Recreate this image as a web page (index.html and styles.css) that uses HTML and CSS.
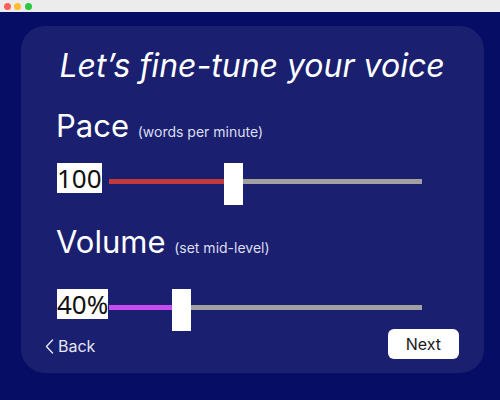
FILE: index.html
```html
<!DOCTYPE html>
<html lang="en">
<head>
<meta charset="utf-8">
<title>Voice settings</title>
<link rel="stylesheet" href="styles.css">
</head>
<body>
<div class="titlebar">
  <span class="dot dot-red"></span>
  <span class="dot dot-yellow"></span>
  <span class="dot dot-green"></span>
</div>
<main class="stage">
  <section class="card">
    <h1 class="title">Let’s fine-tune your voice</h1>

    <div class="field field-pace">
      <h2 class="label">Pace <small class="hint">(words per minute)</small></h2>
      <div class="slider">
        <span class="value">100</span>
        <div class="track">
          <span class="fill fill-red" style="width:115px"></span>
          <span class="thumb"></span>
          <span class="rest"></span>
        </div>
      </div>
    </div>

    <div class="field field-volume">
      <h2 class="label">Volume <small class="hint">(set mid-level)</small></h2>
      <div class="slider">
        <span class="value">40%</span>
        <div class="track">
          <span class="fill fill-purple" style="width:63px"></span>
          <span class="thumb"></span>
          <span class="rest"></span>
        </div>
      </div>
    </div>

    <footer class="nav">
      <button class="back" type="button">
        <svg class="chevron" width="9" height="15" viewBox="0 0 9 15" aria-hidden="true">
          <polyline points="7.5,1 1.5,7.5 7.5,14" fill="none" stroke="#e4e6f4" stroke-width="1.4" stroke-linecap="round" stroke-linejoin="round"/>
        </svg>
        <span>Back</span>
      </button>
      <button class="next" type="button">Next</button>
    </footer>
  </section>
</main>
</body>
</html>
```

FILE: styles.css
```css
* { box-sizing: border-box; }

html, body {
  margin: 0;
  padding: 0;
}

body {
  width: 500px;
  height: 400px;
  overflow: hidden;
  background: #050d64;
  font-family: Inter, "Noto Sans", sans-serif;
  color: #ffffff;
}

.titlebar {
  height: 12px;
  background: #ececec;
  display: flex;
  align-items: center;
  gap: 3.5px;
  padding-left: 3.5px;
}

.dot {
  width: 7px;
  height: 7px;
  border-radius: 50%;
}
.dot-red { background: #fe5f57; }
.dot-yellow { background: #febc2e; }
.dot-green { background: #29c840; }

.stage {
  padding: 14px 16px 0 21px;
}

.card {
  background: #1a206f;
  border-radius: 24px;
  padding: 22px 25px 14px 24px;
}

.title {
  margin: 0;
  font-size: 32px;
  line-height: 36px;
  height: 36px;
  font-weight: 400;
  font-style: italic;
  text-align: center;
  color: #ffffff;
}

.field {
  padding-left: 11px;
}
.field-pace { margin-top: 24px; }
.field-volume { margin-top: 19px; }

.label {
  margin: 0;
  font-size: 31px;
  line-height: 36px;
  height: 36px;
  font-weight: 400;
  color: #ffffff;
  white-space: nowrap;
}

.hint {
  font-family: Inter, sans-serif;
  font-size: 14px;
  line-height: 1;
  color: #dcdef0;
}

.slider {
  display: grid;
  grid-template-columns: 53px 313px;
  align-items: start;
  height: 42px;
  margin-top: 19px;
}
.field-volume .slider { margin-top: 29px; }

.value {
  justify-self: start;
  margin-left: 1px;
  background: #ffffff;
  color: #111111;
  font-family: "Noto Sans", sans-serif;
  font-size: 26px;
  line-height: 30px;
  height: 30px;
  padding: 0;
}

.track {
  display: flex;
  align-items: flex-start;
  height: 42px;
}

.fill, .rest {
  height: 5px;
  margin-top: 16px;
}
.fill-red { background: #c2393c; }
.fill-purple { background: #c54cf0; }
.rest {
  flex: 1;
  background: #a0a0a0;
}

.thumb {
  width: 19px;
  height: 42px;
  background: #ffffff;
}

.nav {
  display: flex;
  justify-content: space-between;
  align-items: center;
  margin-top: -2px;
  height: 30px;
}

.back {
  display: flex;
  align-items: center;
  gap: 4px;
  background: none;
  border: 0;
  padding: 0;
  margin-top: 4px;
  color: #e4e6f4;
  font-family: Inter, sans-serif;
  font-size: 16px;
  line-height: 20px;
  cursor: pointer;
}

.chevron { display: block; }

.next {
  height: 30px;
  padding: 0 18px;
  border: 0;
  border-radius: 6px;
  background: #ffffff;
  color: #1a1a1a;
  font-family: Inter, sans-serif;
  font-size: 16px;
  line-height: 30px;
  cursor: pointer;
}
```
